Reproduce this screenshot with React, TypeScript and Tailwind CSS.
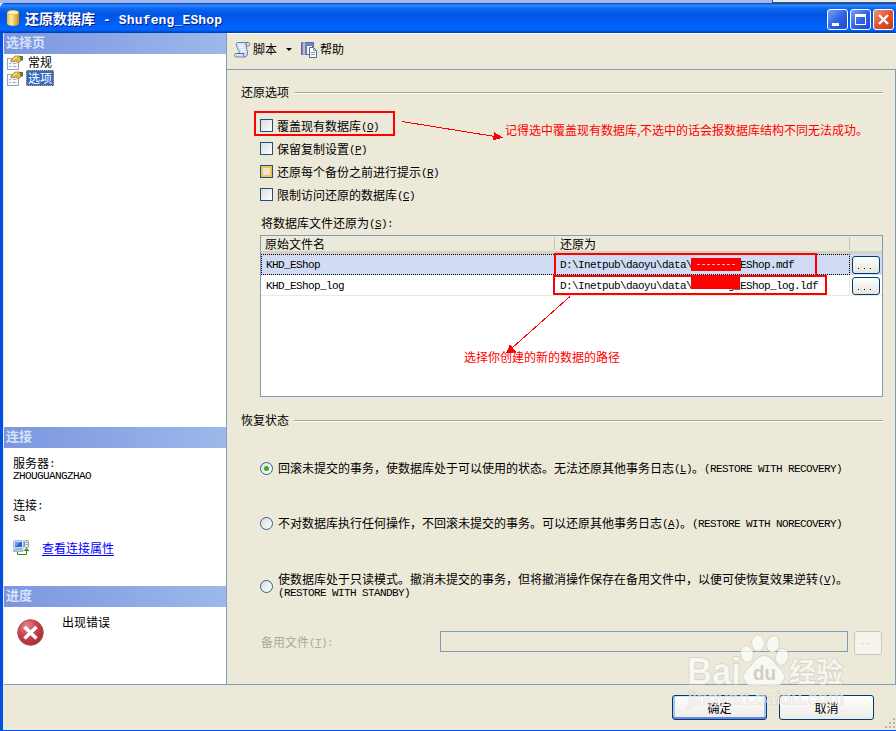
import type { ReactNode } from 'react';

const checks = [
    { label: '覆盖现有数据库(&O)', hot: false },
    { label: '保留复制设置(&P)', hot: false },
    { label: '还原每个备份之前进行提示(&R)', hot: true },
    { label: '限制访问还原的数据库(&C)', hot: false },
];

// Latin runs sit on a fixed 6px pitch; "&X" underlines X as the access key
function Txt({ children }: { children: string }) {
    const parts = children.split(/([\x20-\x7e]+)/);
    return (
        <>
            {parts.map((part, i) => {
                if (i % 2 === 0) return part;
                const [before, after] = part.split('&');
                return (
                    <span key={i} className="align-[1px] font-['Liberation_Mono',monospace] text-[11px] leading-none tracking-[-0.6px] whitespace-pre">
                        {before}
                        {after && <span className="underline underline-offset-1">{after[0]}</span>}
                        {after && after.slice(1)}
                    </span>
                );
            })}
        </>
    );
}

function PaneHeader({ title }: { title: string }) {
    return (
        <div className="h-[21px] shrink-0 bg-gradient-to-r from-[#7b96df] to-[#9db8ea] pl-[2px] text-[13px] leading-[18px] font-bold text-[#d6e2fa]">
            {title}
        </div>
    );
}

function GroupTitle({ title }: { title: string }) {
    return (
        <div className="flex h-4 items-center gap-[5px] pl-[14px] pr-3 leading-4">
            <span>{title}</span>
            <div className="mt-[2px] h-[2px] flex-1 border-t border-[#aca899] bg-white" />
        </div>
    );
}

function PageIcon() {
    return (
        <svg width="16" height="15" viewBox="0 0 16 15">
            <rect x="0.5" y="3.5" width="11" height="11" fill="#f6f8fd" stroke="#9ba4b6" />
            <path d="M2 8.500h2M2 11.500h2M5.500 8.500h4M5.500 11.500h4" stroke="#9fb2d8" />
            <path d="M4 5l4-4 5 0 1 5-3 2-2-2-2 1-1-1-2 1z" fill="#e8b63a" stroke="#9b7420" strokeWidth="0.7" />
            <path d="M12.500 1h3.500v4.500l-2 0z" fill="#438052" />
            <path d="M6 4l4-2" stroke="#fff0a0" />
        </svg>
    );
}

function ScriptIcon() {
    return (
        <svg width="17" height="17" viewBox="0 0 17 17">
            <path d="M3.500 1.500H14c2.500 0 2.500 3.500 0 3.500h-1.500c-.5 3 1.500 5 1 8-.5 2-1 3-3 3H2c-2 0-2-3.500 0-3.500h3.500c.5-2.500-2.500-5-3-7.500C2 3 2.500 1.500 3.500 1.500z" fill="#d3e0f5" stroke="#71839f" />
            <path d="M12.500 5c-1-1-1-3 1-3.500M2 12.500h8c-1 1 0 3 1 3.500" fill="none" stroke="#596d90" />
            <path d="M5 4.500h5M5 6.500h5M6.500 8.500h4M7.500 10.500h4" stroke="#f8fbff" />
        </svg>
    );
}

function HelpIcon() {
    return (
        <svg width="16" height="17" viewBox="0 0 16 17">
            <path d="M.5 1.500h12v12H.5z" fill="#7b82c4" stroke="#5c639f" />
            <path d="M3 1v13" stroke="#c4cbf0" strokeWidth="1.500" />
            <path d="M5.500 4.500h5l2 2v7h-7z" fill="#eef4ff" stroke="#65799d" />
            <path d="M8.500 6.500h4l3 3v7h-7z" fill="#fff" stroke="#52698f" />
            <path d="M12.500 6.500v3h3M10 11.500h4M10 13.500h4" fill="none" stroke="#7f98bf" />
        </svg>
    );
}

function ServerIcon() {
    return (
        <svg width="17" height="16" viewBox="0 0 17 16">
            <rect x="0.500" y="0.500" width="10" height="8" rx="1" fill="#d5e4f6" stroke="#a3b6d3" />
            <rect x="2" y="2" width="7" height="5" fill="#2463d2" />
            <path d="M2 2h5l-3 4H2z" fill="#5c9bf0" />
            <path d="M1 9.500h9v2H0z" fill="#bdc8da" stroke="#8796b0" strokeWidth="0.6" />
            <rect x="11.500" y="0.500" width="4" height="7" rx="1" fill="#e5e9f0" stroke="#8d97a6" />
            <path d="M12.500 2.500h2M12.500 4.500h2" stroke="#8d97a6" />
            <path d="M4.500 12v2.500h9V10" fill="none" stroke="#289018" />
            <path d="M10.500 11l3-3 3 3z" fill="#289018" />
        </svg>
    );
}

function ErrorIcon() {
    return (
        <svg width="27" height="27" viewBox="0 0 27 27">
            <defs>
                <radialGradient id="err" cx="0.350" cy="0.250" r="0.800">
                    <stop offset="0" stopColor="#e58a8e" />
                    <stop offset="0.500" stopColor="#c9424b" />
                    <stop offset="1" stopColor="#a92a36" />
                </radialGradient>
            </defs>
            <circle cx="13.500" cy="13.500" r="12.800" fill="url(#err)" stroke="#a94a50" />
            <path d="M7.500 8l12 11.500M19.500 8l-12 11.500" stroke="#fff" strokeWidth="3.600" />
        </svg>
    );
}

function CaptionButton({ close, children }: { close?: boolean; children: ReactNode }) {
    return (
        <button
            className={
                close
                    ? 'h-[21px] w-[21px] rounded-[3px] border border-white bg-gradient-to-br from-[#f0937a] via-[#e0532f] to-[#c33c12]'
                    : 'h-[21px] w-[21px] rounded-[3px] border border-white bg-gradient-to-br from-[#7ba0f5] via-[#3165e6] to-[#1c49d0]'
            }
        >
            <svg width="19" height="19" viewBox="0 0 19 19">{children}</svg>
        </button>
    );
}

function Radio({ checked }: { checked?: boolean }) {
    return (
        <span className="flex h-[13px] w-[13px] shrink-0 items-center justify-center rounded-full border border-[#2c628f] bg-gradient-to-br from-[#dcdcd6] to-white">
            {checked && <span className="h-[5px] w-[5px] rounded-full bg-[#2faf2b]" />}
        </span>
    );
}

function BrowseButton() {
    return (
        <button className="flex h-[18px] w-[28px] items-end gap-[5px] rounded-[3px] border border-[#003c74] bg-gradient-to-b from-white to-[#e6e5dc] pb-[4px] pl-[5px]">
            <span className="h-px w-px bg-black" />
            <span className="h-px w-px bg-black" />
            <span className="h-px w-px bg-black" />
        </button>
    );
}

function FileRow({ name, path, selected }: { name: string; path: string; selected?: boolean }) {
    return (
        <div className={selected ? 'flex h-[21px] bg-[#d1dbf3]' : 'flex h-[21px] border-b border-[#ece9d8]'}>
            <div className={selected ? 'flex w-[589px] border border-dotted border-black' : 'flex w-[589px] border-r border-[#ece9d8] pt-px pl-px'}>
                <div className={selected ? 'w-[293px] pl-1 leading-[18px]' : 'w-[293px] border-r border-[#ece9d8] pl-1 leading-[18px]'}>
                    <Txt>{name}</Txt>
                </div>
                <div className="pl-[5px] leading-[18px]">
                    <Txt>{path}</Txt>
                </div>
            </div>
            <div className="pt-[2px] pl-[2px]">
                <BrowseButton />
            </div>
        </div>
    );
}

function Annotations() {
    return (
        <div className="pointer-events-none absolute inset-0 text-[#ff0000]">
            <div className="absolute top-[111px] left-[254px] h-[25px] w-[141px] border-2 border-[#ff0000]" />
            <div className="absolute top-[253px] left-[554px] h-[24px] w-[263px] border-2 border-[#ff0000]" />
            <div className="absolute top-[275px] left-[553px] h-[20px] w-[274px] border-2 border-[#ff0000]" />
            <div className="absolute top-[258px] left-[691px] h-[13px] w-[50px] bg-[#ff0000] px-[6px] pt-[6px]">
                <div className="border-t border-dashed border-[#ffb0b0]" />
            </div>
            <div className="absolute top-[277px] left-[691px] h-[12px] w-[49px] bg-[#ff0000]" />
            <svg className="absolute inset-0" width="896" height="731" viewBox="0 0 896 731" shapeRendering="crispEdges">
                <path d="M402 121.500L495 136.500M570 296.500L512 348" stroke="#ff0000" fill="none" />
                <path d="M494 132l9 5.500-10 3zM506 353.500l4-9.500 6 8z" fill="#ff0000" />
            </svg>
            <div className="absolute top-[121px] left-[505px] leading-[18px] whitespace-nowrap">
                记得选中覆盖现有数据库<span className="inline-block w-[3px]">,</span>不选中的话会报数据库结构不同无法成功。
            </div>
            <div className="absolute top-[348px] left-[464px] leading-[18px] whitespace-nowrap">选择你创建的新的数据的路径</div>
        </div>
    );
}

function Watermark() {
    return (
        <svg className="pointer-events-none absolute top-[630px] left-[680px]" width="175" height="85" viewBox="0 0 175 85">
            <g fill="#fff" fillOpacity="0.700" stroke="#c9c6b8" strokeOpacity="0.600" strokeWidth="1.500" paintOrder="stroke">
                <ellipse cx="67" cy="24" rx="6" ry="8" transform="rotate(-12 67 24)" />
                <ellipse cx="78" cy="13" rx="6" ry="8" />
                <ellipse cx="93" cy="14" rx="6" ry="8" transform="rotate(10 93 14)" />
                <ellipse cx="102" cy="27" rx="6" ry="8" transform="rotate(15 102 27)" />
                <path d="M84 26c8 0 9 6 14 11 6 5 8 9 5 14-3 6-11 5-19 4-8 1-16 2-19-4-3-5-1-9 5-14 5-5 6-11 14-11z" />
                <text x="7" y="54" textLength="54" lengthAdjust="spacingAndGlyphs" className="font-['Liberation_Sans',sans-serif] text-[36px] font-bold">Bai</text>
                <text x="109" y="52" textLength="54" className="font-['Noto_Sans_CJK_SC',sans-serif] text-[27px] font-bold">经验</text>
                <text x="8" y="74" textLength="156" className="font-['Liberation_Sans',sans-serif] text-[19px]" fillOpacity="0.600" strokeOpacity="0.400">jingyan.baidu.com</text>
            </g>
            <text x="73" y="50" textLength="23" lengthAdjust="spacingAndGlyphs" className="font-['Liberation_Sans',sans-serif] text-[20px] font-bold" fill="#d2cfc2">du</text>
        </svg>
    );
}

export default function App() {
    return (
        <div className="relative flex h-[731px] w-[896px] flex-col overflow-hidden bg-[#ece9d8] font-['Noto_Sans_CJK_SC',sans-serif] text-[12px] text-black">
            <div className="flex h-[3px] shrink-0 bg-[#a0b8ea]">
                <div className="ml-[772px] flex-1 border-b border-l border-[#3e5257] bg-[#e8eee9]" />
            </div>
            <div className="flex h-[30px] shrink-0 items-center rounded-tl-[5px] bg-[linear-gradient(#0831b8_0,#2e8bff_2px,#0865ee_6px,#0054e3_12px,#0062fb_23px,#0065ff_27px,#0037b0_30px)] pr-[2px] pl-[7px] text-white">
                <svg width="12" height="16" viewBox="0 0 12 16">
                    <defs>
                        <linearGradient id="cyl">
                            <stop offset="0" stopColor="#f0b72b" />
                            <stop offset="0.350" stopColor="#fff2a6" />
                            <stop offset="1" stopColor="#d78500" />
                        </linearGradient>
                    </defs>
                    <path d="M0 2.500v11c0 3 12 3 12 0v-11z" fill="url(#cyl)" />
                    <ellipse cx="6" cy="2.500" rx="5.700" ry="2.200" fill="#fff0b5" stroke="#e1ad37" strokeWidth="0.600" />
                </svg>
                <h1 className="ml-[6px] flex-1 pt-[2px] text-[14px] leading-[26px] font-bold whitespace-pre [text-shadow:1px_1px_#0a1883]">
                    还原数据库
                    <span className="font-['Liberation_Mono',monospace] text-[13px] tracking-[0.150px]"> - Shufeng_EShop</span>
                </h1>
                <div className="flex gap-[2px] pt-[2px]">
                    <CaptionButton>
                        <path d="M4 13h7v3H4z" fill="#fff" />
                    </CaptionButton>
                    <CaptionButton>
                        <path d="M4 4h11v11H4zM5 7v7h9V7z" fill="#fff" fillRule="evenodd" />
                    </CaptionButton>
                    <CaptionButton close>
                        <path d="M5 5l9 9M14 5l-9 9" stroke="#fff" strokeWidth="2.400" />
                    </CaptionButton>
                </div>
            </div>
            <div className="flex min-h-0 flex-1 flex-col border-b border-l-[3px] border-[#0050e8] pl-px">
                <div className="flex h-[652px] shrink-0 border-b border-[#7f9db9]">
                    <aside className="flex w-[223px] shrink-0 flex-col border-r border-[#7f9db9] bg-white">
                        <PaneHeader title="选择页" />
                        <div className="h-[373px] pl-[3px]">
                            <div className="flex h-4 items-center">
                                <PageIcon />
                                <span className="pl-[5px] leading-4">常规</span>
                            </div>
                            <div className="flex h-4 items-center">
                                <PageIcon />
                                <span className="ml-[3px] h-4 border border-dotted border-[#d9a04a] bg-[#316ac5] px-px leading-[13px] text-white">选项</span>
                            </div>
                        </div>
                        <PaneHeader title="连接" />
                        <div className="h-[138px] pt-[8px] pl-[9px] leading-[13px]">
                            <div className="h-[13px]"><Txt>服务器:</Txt></div>
                            <div className="h-[13px] leading-[11px]"><Txt>ZHOUGUANGZHAO</Txt></div>
                            <div className="mt-4 h-[13px]"><Txt>连接:</Txt></div>
                            <div className="h-[13px] leading-[11px]"><Txt>sa</Txt></div>
                            <div className="mt-[16px] flex h-[15px] items-center gap-[12px]">
                                <ServerIcon />
                                <a className="pb-px text-[#0000ff] underline underline-offset-2">查看连接属性</a>
                            </div>
                        </div>
                        <PaneHeader title="进度" />
                        <div className="flex flex-1 gap-[18px] pl-[13px]">
                            <div className="pt-[12px]"><ErrorIcon /></div>
                            <span className="pt-[7px] leading-4">出现错误</span>
                        </div>
                    </aside>
                    <main className="flex-1 border-t border-white">
                        <div className="flex h-[36px] items-center border-b border-[#7f9db9] pb-[5px] pl-[7px]">
                            <ScriptIcon />
                            <span className="ml-[2px]">脚本</span>
                            <span className="mx-[9px] border-x-[3px] border-t-[3px] border-x-transparent border-t-black" />
                            <HelpIcon />
                            <span className="ml-[3px]">帮助</span>
                        </div>
                        <div className="h-[614px] border-r border-[#7f9db9] pt-[14px]">
                            <GroupTitle title="还原选项" />
                            <div className="pt-[14px] pl-[33px]">
                                {checks.map((c) => (
                                    <label key={c.label} className="flex h-[23px] items-center gap-1">
                                        <span
                                            className={
                                                c.hot
                                                    ? 'h-[13px] w-[13px] border border-[#1c5180] bg-[#e6e5de] shadow-[inset_0_0_0_2px_#f8c04c]'
                                                    : 'h-[13px] w-[13px] border border-[#1c5180] bg-gradient-to-br from-[#dcdcd7] to-white'
                                            }
                                        />
                                        <span><Txt>{c.label}</Txt></span>
                                    </label>
                                ))}
                            </div>
                            <div className="mt-[8px] h-[21px] pl-[34px] leading-[17px]"><Txt>将数据库文件还原为(&S):</Txt></div>
                            <div className="ml-[33px] h-[162px] w-[623px] border border-[#7f9db9] bg-white">
                                <div className="flex h-[18px] border-b-[3px] border-[#d6d2c2] bg-[#ebeadb] leading-[17px]">
                                    <span className="my-px w-[294px] border-r border-[#c7c5b2] pl-1 leading-[14px]">原始文件名</span>
                                    <span className="my-px w-[295px] border-r border-[#c7c5b2] pl-[5px] leading-[14px]">还原为</span>
                                </div>
                                <FileRow selected name="KHD_EShop" path="D:\Inetpub\daoyu\data\Shufeng_EShop.mdf" />
                                <FileRow name="KHD_EShop_log" path="D:\Inetpub\daoyu\data\Shufeng_EShop_log.ldf" />
                            </div>
                            <div className="pt-[15px]">
                                <GroupTitle title="恢复状态" />
                            </div>
                            <div className="pt-[32px] pl-[33px]">
                                <label className="flex h-4 items-center gap-[5px] whitespace-nowrap">
                                    <Radio checked />
                                    <span><Txt>回滚未提交的事务，使数据库处于可以使用的状态。无法还原其他事务日志(&L)。(RESTORE WITH RECOVERY)</Txt></span>
                                </label>
                                <label className="mt-[39px] flex h-4 items-center gap-[5px] whitespace-nowrap">
                                    <Radio />
                                    <span><Txt>不对数据库执行任何操作，不回滚未提交的事务。可以还原其他事务日志(&A)。(RESTORE WITH NORECOVERY)</Txt></span>
                                </label>
                                <label className="mt-[42px] flex h-[26px] items-center gap-[5px] whitespace-nowrap">
                                    <Radio />
                                    <span className="leading-[12px]">
                                        <Txt>使数据库处于只读模式。撤消未提交的事务，但将撤消操作保存在备用文件中，以便可使恢复效果逆转(&V)。</Txt>
                                        <br />
                                        <Txt>(RESTORE WITH STANDBY)</Txt>
                                    </span>
                                </label>
                                <div className="mt-[32px] flex">
                                    <span className="w-[180px] pl-px leading-[21px] text-[#aca899]"><Txt>备用文件(&T):</Txt></span>
                                    <div className="h-[21px] w-[408px] border border-[#7f9db9]" />
                                    <button className="ml-[6px] flex h-[24px] w-[28px] items-center gap-[5px] rounded-[3px] border border-[#c9c7ba] bg-[#f5f4ea] pl-[7px]">
                                        <span className="h-px w-px bg-[#aca899]" />
                                        <span className="h-px w-px bg-[#aca899]" />
                                    </button>
                                </div>
                            </div>
                        </div>
                    </main>
                </div>
                <footer className="flex flex-1 justify-end gap-[12px] pt-[10px] pr-[22px]">
                    <button className="h-[25px] w-[95px] rounded-[3px] border border-[#003c74] bg-gradient-to-b from-white to-[#ecebe5] shadow-[inset_0_-2px_#6982ee,inset_2px_0_#a9c4f3,inset_-2px_0_#a9c4f3,inset_0_1px_#cee7ff]">确定</button>
                    <button className="h-[25px] w-[95px] rounded-[3px] border border-[#003c74] bg-gradient-to-b from-white to-[#ecebe5]">取消</button>
                </footer>
            </div>
            <svg className="absolute right-0 bottom-[2px]" width="11" height="11" viewBox="0 0 11 11">
                <path d="M8 0h2v2H8zM4 4h2v2H4zM8 4h2v2H8zM0 8h2v2H0zM4 8h2v2H4zM8 8h2v2H8z" fill="#b8b4a2" />
            </svg>
            <Annotations />
            <Watermark />
        </div>
    );
}
